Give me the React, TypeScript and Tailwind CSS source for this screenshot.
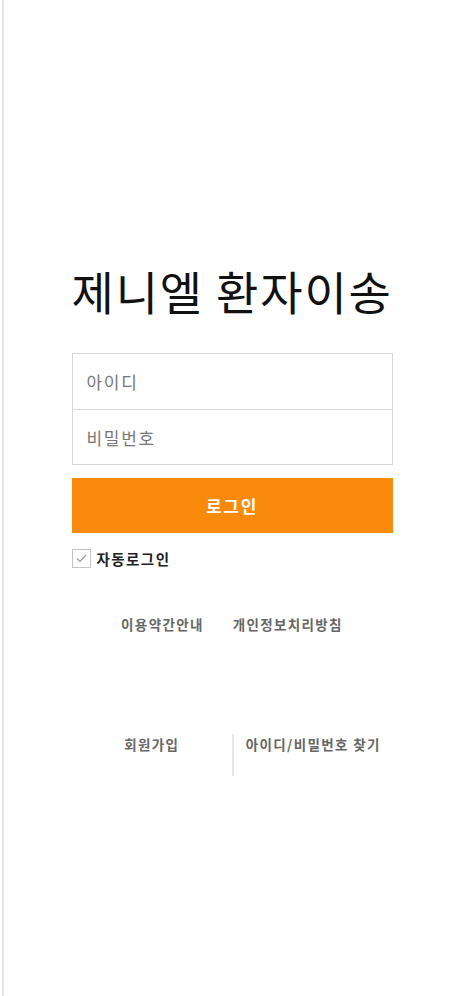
import { useState } from 'react';

const FONT = '[font-family:"Noto_Sans_CJK_KR","Noto_Sans",sans-serif]';

export default function App() {
  const [autoLogin, setAutoLogin] = useState(true);

  return (
    <div className={`min-h-[996px] bg-white pl-[2px] ${FONT}`}>
      <div className="min-h-[996px] border-l-2 border-[#e6e6e6]">
        <div className="mx-auto flex w-[321px] flex-col pt-[264px]">
          <h1 className="text-center text-[46px] leading-[53px] font-normal tracking-[0.04em] text-[#111] whitespace-nowrap">
            제니엘 환자이송
          </h1>

          {/* Inputs */}
          <div className="mt-[36px] border border-[#d6d6d6]">
            <input
              placeholder="아이디"
              className="block h-[55px] w-full px-[14px] text-[17px] tracking-[0.1em] text-[#333] placeholder:text-[#777] outline-none"
            />
            <input
              type="password"
              placeholder="비밀번호"
              className="block h-[55px] w-full border-t border-[#d6d6d6] px-[14px] text-[17px] tracking-[0.1em] text-[#333] placeholder:text-[#777] outline-none"
            />
          </div>

          <button className="mt-[13px] h-[55px] w-full bg-[#f98a0b] text-[17px] font-bold tracking-[0.1em] text-white">
            로그인
          </button>

          {/* Auto login */}
          <label className="mt-[16px] flex cursor-pointer items-center gap-[6px]">
            <span
              onClick={() => setAutoLogin(!autoLogin)}
              className="flex h-[19px] w-[19px] items-center justify-center border border-[#c4c4c4] bg-white"
            >
              {autoLogin && (
                <svg width="13" height="13" viewBox="0 0 13 13" fill="none">
                  <path d="M2 6.5l3 3 6-6.5" stroke="#9a9a9a" strokeWidth="1.2" />
                </svg>
              )}
            </span>
            <span className="text-[14.5px] leading-[19px] font-bold tracking-[0.1em] text-[#222]">자동로그인</span>
          </label>

          {/* Policy links */}
          <div className="mt-[46px] flex justify-center gap-[29px] text-[13.5px] font-bold tracking-[0.1em] text-[#666]">
            <a>이용약간안내</a>
            <a>개인정보치리방침</a>
          </div>

          {/* Bottom links */}
          <div className="mt-[100px] grid grid-cols-2 text-[13.5px] font-bold tracking-[0.1em] text-[#666]">
            <a className="text-center">회원가입</a>
            <div className="h-[42px] border-l-2 border-[#e6e6e6] text-center">
              <a>아이디/비밀번호 찾기</a>
            </div>
          </div>
        </div>
      </div>
    </div>
  );
}
